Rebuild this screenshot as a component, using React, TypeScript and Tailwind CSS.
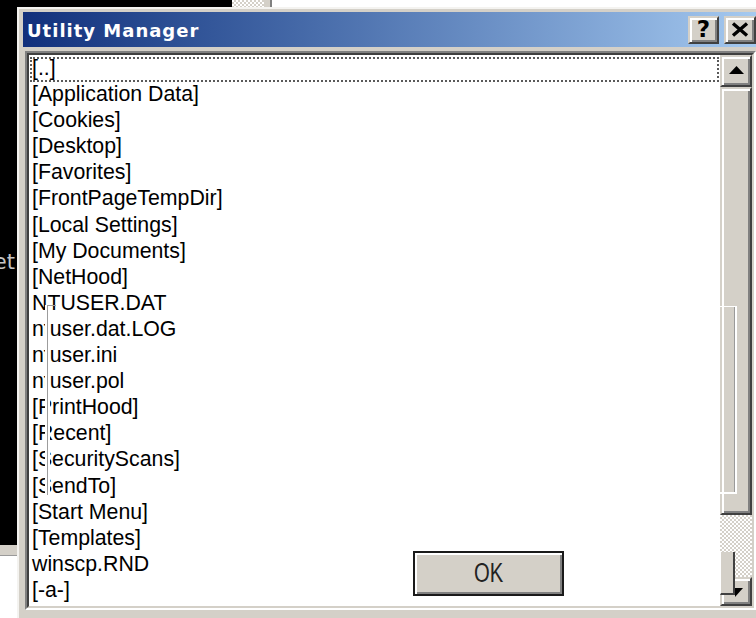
import React from "react";

const entries = [
  "[..]",
  "[Application Data]",
  "[Cookies]",
  "[Desktop]",
  "[Favorites]",
  "[FrontPageTempDir]",
  "[Local Settings]",
  "[My Documents]",
  "[NetHood]",
  "NTUSER.DAT",
  "ntuser.dat.LOG",
  "ntuser.ini",
  "ntuser.pol",
  "[PrintHood]",
  "[Recent]",
  "[SecurityScans]",
  "[SendTo]",
  "[Start Menu]",
  "[Templates]",
  "winscp.RND",
  "[-a-]",
  "[-c-]",
];

// classic 3D raised bevel (doubled for the large display scale)
const raised =
  "bg-[#d4d0c8] border-2 border-t-[#d4d0c8] border-l-[#d4d0c8] border-r-[#404040] border-b-[#404040] shadow-[inset_2px_2px_0_#ffffff,inset_-2px_-2px_0_#808080]";

const checker =
  "bg-[#ebe9e4] bg-[image:repeating-conic-gradient(#d4d0c8_0%_25%,#ffffff_0%_50%)] bg-[length:4px_4px]";

function CloseGlyph() {
  return (
    <svg width="18" height="15" viewBox="0 0 18 15">
      <path d="M2 1.5 L16 13.5 M16 1.5 L2 13.5" stroke="#000" strokeWidth="3.4" strokeLinecap="butt" />
    </svg>
  );
}

function UpArrow() {
  return (
    <svg width="15" height="8" viewBox="0 0 15 8">
      <polygon points="7.5,0 15,8 0,8" fill="#000" />
    </svg>
  );
}

export default function App() {
  return (
    <div className="relative w-[756px] h-[618px] overflow-hidden bg-white font-['Liberation_Sans',Arial,sans-serif]">
      {/* desktop strip above the dialog */}
      <div className="absolute left-0 top-0 w-[756px] h-[8px] flex">
        <div className="w-[232px] bg-black" />
        <div className={`w-[32px] ${checker}`} />
        <div className="w-[8px] bg-[#d4d0c8] border-r-2 border-[#808080]" />
        <div className="flex-1 bg-white" />
      </div>

      {/* dark window on the left */}
      <div className="absolute left-0 top-0 w-[17px] h-[618px] flex flex-col">
        <div className="h-[545px] bg-black relative overflow-hidden">
          <div className="absolute right-[2px] top-[252px] text-[21px] leading-none text-[#c4c4c4] font-['DejaVu_Sans',Verdana,sans-serif] whitespace-nowrap">
            et
          </div>
        </div>
        <div className="h-[11px] bg-[#d4d0c8] border-b border-[#9a9a9a]" />
        <div className="flex-1 bg-white" />
      </div>

      {/* Utility Manager dialog */}
      <div className="absolute left-[17px] top-[7px] w-[745px] h-[620px] bg-[#d4d0c8] border-l-2 border-t-2 border-[#f4f3f0] pl-[4px] pt-[3px] flex flex-col">
        <div className="h-[35px] w-[737px] flex items-center pl-[4px] pr-[4px] bg-gradient-to-r from-[#12307c] to-[#a6caf0]">
          <span className="pt-[3px] text-white font-bold text-[18px] leading-none tracking-[1px] font-['DejaVu_Sans',Verdana,sans-serif]">
            Utility Manager
          </span>
          <div className="ml-auto flex gap-[5px]">
            <div className={`w-[31px] h-[28px] flex items-center justify-center ${raised}`}>
              <span className="text-[23px] leading-none font-bold text-black font-['DejaVu_Sans',Verdana,sans-serif]">?</span>
            </div>
            <div className={`w-[32px] h-[28px] flex items-center justify-center ${raised}`}>
              <CloseGlyph />
            </div>
          </div>
        </div>

        {/* list box, sunken */}
        <div className="mt-[4px] ml-[2px] w-[731px] h-[559px] border-2 border-t-[#808080] border-l-[#808080] border-r-white border-b-white">
          <div className="w-full h-full border-2 border-t-[#404040] border-l-[#404040] border-r-[#d4d0c8] border-b-[#d4d0c8] flex">
            <div className="relative w-[691px] h-full bg-white overflow-hidden">
              <ul className="flex flex-col">
                {entries.map((name, i) => (
                  <li
                    key={name}
                    className="relative h-[26.1px] shrink-0 pl-[3px] text-[21.3px] leading-[26.1px] text-black whitespace-nowrap"
                  >
                    {i === 0 && (
                      <span className="absolute left-[1px] right-[1px] top-[2px] h-[25px] border-2 border-dotted border-[#5a5a5a]" />
                    )}
                    <span className="relative">{name}</span>
                  </li>
                ))}
              </ul>
              {/* leftover trace of a dragged outline */}
              <div className="absolute left-[16px] top-[250px] w-[5px] h-[190px] bg-white">
                <div className="absolute left-[2px] top-0 w-px h-full bg-[#9c9c9c]" />
              </div>
              <div className="absolute left-[18px] top-[250px] w-[9px] h-px bg-[#9c9c9c]" />
            </div>

            {/* vertical scroll bar */}
            <div className="relative w-[32px] h-full flex flex-col">
              <div className={`h-[32px] shrink-0 flex items-center justify-center ${raised}`}>
                <div className="-mt-[3px]">
                  <UpArrow />
                </div>
              </div>
              <div className={`relative h-[428px] shrink-0 ${raised}`}>
                <div className="absolute -left-[2px] top-[217px] w-[17px] h-[188px] border-t border-r-2 border-b-2 border-white">
                  <div className="w-full h-full border-r border-[#9a9a9a]" />
                </div>
              </div>
              <div className={`h-[62px] shrink-0 ${checker}`} />
              <div className={`h-[29px] shrink-0 ${raised}`} />

              <div className="absolute left-0 top-[497px] w-[15px] h-[43px] bg-[#d4d0c8] border-l border-white border-r-2 border-r-[#404040] border-b-2 border-b-[#404040]" />
              <svg className="absolute left-[15px] top-[533px]" width="8" height="9" viewBox="0 0 8 9">
                <polygon points="0,0 8,0 0,9" fill="#000" />
              </svg>
            </div>
          </div>
        </div>
      </div>

      {/* default push button */}
      <div className="absolute left-[413px] top-[551px] w-[151px] h-[45px] bg-[#d4d0c8] border-2 border-[#1a1a1a] shadow-[inset_2px_2px_0_#ffffff,inset_-2px_-2px_0_#808080] flex items-center justify-center">
        <span className="inline-block scale-x-75 text-[27px] leading-none text-[#222]">OK</span>
      </div>
    </div>
  );
}
